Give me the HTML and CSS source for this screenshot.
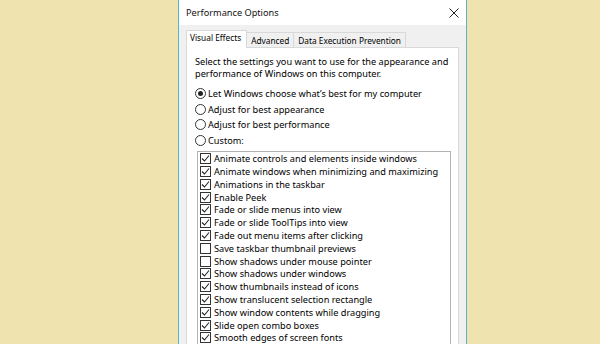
FILE: index.html
```html
<!DOCTYPE html>
<html lang="en">
<head>
    <meta charset="UTF-8">
    <title>Performance Options</title>
    <link rel="stylesheet" href="styles.css">
</head>
<body>

    <div class="window">
        <div class="titlebar">
            <span class="title">Performance Options</span>
            <svg class="close" width="10" height="10" viewBox="0 0 10 10">
                <path d="M0.5 0.5 L9.5 9.5 M9.5 0.5 L0.5 9.5" stroke="#222" stroke-width="1" fill="none"/>
            </svg>
        </div>

        <div class="content">
            <div class="tabs">
                <div class="tab selected">Visual Effects</div>
                <div class="tab">Advanced</div>
                <div class="tab">Data Execution Prevention</div>
            </div>

            <div class="panel">
                <p class="intro">Select the settings you want to use for the appearance and performance of Windows on this computer.</p>

                <div class="radios">
                    <div class="radio-row"><span class="radio on"></span>Let Windows choose what’s best for my computer</div>
                    <div class="radio-row"><span class="radio"></span>Adjust for best appearance</div>
                    <div class="radio-row"><span class="radio"></span>Adjust for best performance</div>
                    <div class="radio-row"><span class="radio"></span>Custom:</div>
                </div>

                <div class="listbox">
                    <div class="item"><span class="check"><svg width="11" height="11" viewBox="0 0 11 11"><path d="M2 5.5 L4.5 8 L9 2.5" stroke="#222" stroke-width="1.1" fill="none"/></svg></span>Animate controls and elements inside windows</div>
                    <div class="item"><span class="check"><svg width="11" height="11" viewBox="0 0 11 11"><path d="M2 5.5 L4.5 8 L9 2.5" stroke="#222" stroke-width="1.1" fill="none"/></svg></span>Animate windows when minimizing and maximizing</div>
                    <div class="item"><span class="check"><svg width="11" height="11" viewBox="0 0 11 11"><path d="M2 5.5 L4.5 8 L9 2.5" stroke="#222" stroke-width="1.1" fill="none"/></svg></span>Animations in the taskbar</div>
                    <div class="item"><span class="check"><svg width="11" height="11" viewBox="0 0 11 11"><path d="M2 5.5 L4.5 8 L9 2.5" stroke="#222" stroke-width="1.1" fill="none"/></svg></span>Enable Peek</div>
                    <div class="item"><span class="check"><svg width="11" height="11" viewBox="0 0 11 11"><path d="M2 5.5 L4.5 8 L9 2.5" stroke="#222" stroke-width="1.1" fill="none"/></svg></span>Fade or slide menus into view</div>
                    <div class="item"><span class="check"><svg width="11" height="11" viewBox="0 0 11 11"><path d="M2 5.5 L4.5 8 L9 2.5" stroke="#222" stroke-width="1.1" fill="none"/></svg></span>Fade or slide ToolTips into view</div>
                    <div class="item"><span class="check"><svg width="11" height="11" viewBox="0 0 11 11"><path d="M2 5.5 L4.5 8 L9 2.5" stroke="#222" stroke-width="1.1" fill="none"/></svg></span>Fade out menu items after clicking</div>
                    <div class="item"><span class="check"></span>Save taskbar thumbnail previews</div>
                    <div class="item"><span class="check"></span>Show shadows under mouse pointer</div>
                    <div class="item"><span class="check"><svg width="11" height="11" viewBox="0 0 11 11"><path d="M2 5.5 L4.5 8 L9 2.5" stroke="#222" stroke-width="1.1" fill="none"/></svg></span>Show shadows under windows</div>
                    <div class="item"><span class="check"><svg width="11" height="11" viewBox="0 0 11 11"><path d="M2 5.5 L4.5 8 L9 2.5" stroke="#222" stroke-width="1.1" fill="none"/></svg></span>Show thumbnails instead of icons</div>
                    <div class="item"><span class="check"><svg width="11" height="11" viewBox="0 0 11 11"><path d="M2 5.5 L4.5 8 L9 2.5" stroke="#222" stroke-width="1.1" fill="none"/></svg></span>Show translucent selection rectangle</div>
                    <div class="item"><span class="check"><svg width="11" height="11" viewBox="0 0 11 11"><path d="M2 5.5 L4.5 8 L9 2.5" stroke="#222" stroke-width="1.1" fill="none"/></svg></span>Show window contents while dragging</div>
                    <div class="item"><span class="check"><svg width="11" height="11" viewBox="0 0 11 11"><path d="M2 5.5 L4.5 8 L9 2.5" stroke="#222" stroke-width="1.1" fill="none"/></svg></span>Slide open combo boxes</div>
                    <div class="item"><span class="check"><svg width="11" height="11" viewBox="0 0 11 11"><path d="M2 5.5 L4.5 8 L9 2.5" stroke="#222" stroke-width="1.1" fill="none"/></svg></span>Smooth edges of screen fonts</div>
                </div>
            </div>
        </div>
    </div>

</body>
</html>
```

FILE: styles.css
```css
* {
    box-sizing: border-box;
}

body, html {
    margin: 0;
    height: 100%;
    overflow: hidden;
    background-color: #efe3b0;
    font-family: "Noto Sans", sans-serif;
    font-size: 9.2px;
    color: #000;
}

body {
    display: flex;
    padding-left: 178px;
}

.window {
    width: 289px;
    height: 400px;
    border-left: 1px solid #5eb3c2;
    border-right: 1px solid #5eb3c2;
    background-color: #f0f0f0;
    display: flex;
    flex-direction: column;
}

.titlebar {
    height: 25px;
    background-color: #ffffff;
    display: flex;
    align-items: center;
    justify-content: space-between;
    padding: 0 7px 0 7px;
}

.title {
    font-size: 9.2px;
    color: #111;
}

.content {
    padding: 5px 7px 0 7px;
    display: flex;
    flex-direction: column;
}

.tabs {
    display: flex;
    align-items: flex-end;
    height: 17px;
    position: relative;
    z-index: 1;
    font-size: 8.3px;
}

.tab {
    height: 15px;
    line-height: 15px;
    padding: 0 4px;
    border: 1px solid #d9d9d9;
    border-bottom: none;
    background-color: #f0f0f0;
    margin-left: -1px;
}

.tab.selected {
    height: 18px;
    line-height: 14px;
    margin-bottom: -1px;
    background-color: #ffffff;
    padding: 0 5px 0 3px;
    margin-left: 0;
}

.panel {
    background-color: #ffffff;
    border: 1px solid #d9d9d9;
    height: 320px;
    padding: 8px 6px 0 8px;
}

.intro {
    margin: 0 0 6px 0;
    line-height: 12px;
}

.radios {
    display: flex;
    flex-direction: column;
}

.radio-row {
    height: 15.6px;
    display: flex;
    align-items: center;
}

.radio {
    width: 11px;
    height: 11px;
    border: 1px solid #333;
    border-radius: 50%;
    background-color: #fff;
    margin-right: 2px;
    display: flex;
    align-items: center;
    justify-content: center;
}

.radio.on::after {
    content: "";
    width: 5px;
    height: 5px;
    border-radius: 50%;
    background-color: #222;
}

.listbox {
    margin-top: 3px;
    margin-left: 2px;
    width: 254px;
    height: 220px;
    border: 1px solid #b2b2b2;
    padding: 0 2px;
}

.item {
    height: 12.8px;
    display: flex;
    align-items: center;
    white-space: nowrap;
}

.check {
    width: 11px;
    height: 11px;
    border: 1px solid #333;
    background-color: #fff;
    margin-right: 3px;
    display: flex;
    flex-shrink: 0;
}

.check svg {
    margin: -1px;
}
```
